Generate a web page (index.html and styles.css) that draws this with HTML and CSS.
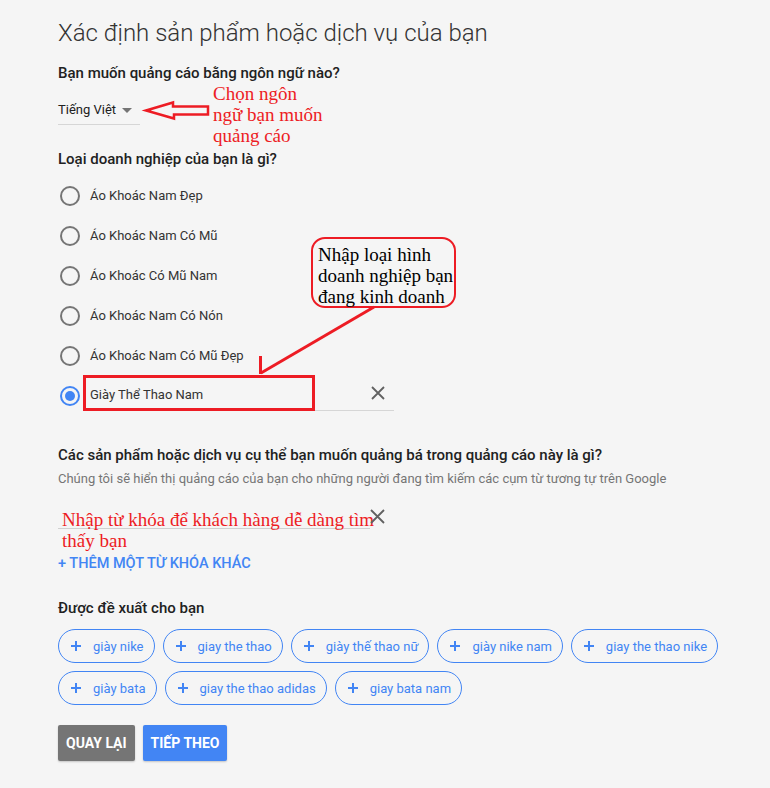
FILE: index.html
```html
<!DOCTYPE html>
<html lang="vi">
<head>
<meta charset="utf-8">
<title>Xác định sản phẩm hoặc dịch vụ của bạn</title>
<link rel="stylesheet" href="styles.css">
</head>
<body>
<div class="page">
  <h1 class="title">Xác định sản phẩm hoặc dịch vụ của bạn</h1>

  <h2 class="q q1">Bạn muốn quảng cáo bằng ngôn ngữ nào?</h2>
  <div class="select"><span>Tiếng Việt</span><span class="caret"></span></div>

  <h2 class="q q2">Loại doanh nghiệp của bạn là gì?</h2>
  <div class="radios">
    <div class="radio-row"><span class="radio"></span><span>Áo Khoác Nam Đẹp</span></div>
    <div class="radio-row"><span class="radio"></span><span>Áo Khoác Nam Có Mũ</span></div>
    <div class="radio-row"><span class="radio"></span><span>Áo Khoác Có Mũ Nam</span></div>
    <div class="radio-row"><span class="radio"></span><span>Áo Khoác Nam Có Nón</span></div>
    <div class="radio-row"><span class="radio"></span><span>Áo Khoác Nam Có Mũ Đẹp</span></div>
    <div class="radio-row"><span class="radio on"></span>
      <div class="text-field"><span>Giày Thể Thao Nam</span>
        <svg class="x-icon" width="14" height="14" viewBox="0 0 14 14"><path d="M1 1L13 13M13 1L1 13" stroke="#616161" stroke-width="1.8" fill="none"/></svg>
      </div>
    </div>
  </div>

  <h2 class="q q3">Các sản phẩm hoặc dịch vụ cụ thể bạn muốn quảng bá trong quảng cáo này là gì?</h2>
  <p class="sub">Chúng tôi sẽ hiển thị quảng cáo của bạn cho những người đang tìm kiếm các cụm từ tương tự trên Google</p>

  <div class="kw-row">
    <div class="kw-field"><span class="kw-text">Nhập từ khóa để khách hàng dễ dàng tìm<br>thấy bạn</span></div>
    <svg class="kw-x" width="15" height="15" viewBox="0 0 15 15"><path d="M1 1L14 14M14 1L1 14" stroke="#616161" stroke-width="1.8" fill="none"/></svg>
  </div>
  <div class="add-link">+ THÊM MỘT TỪ KHÓA KHÁC</div>

  <h2 class="q q4">Được đề xuất cho bạn</h2>
  <div class="chips">
    <span class="chip"><span class="plus"></span>giày nike</span>
    <span class="chip"><span class="plus"></span>giay the thao</span>
    <span class="chip"><span class="plus"></span>giày thế thao nữ</span>
    <span class="chip"><span class="plus"></span>giày nike nam</span>
    <span class="chip"><span class="plus"></span>giay the thao nike</span>
    <span class="chip"><span class="plus"></span>giày bata</span>
    <span class="chip"><span class="plus"></span>giay the thao adidas</span>
    <span class="chip"><span class="plus"></span>giay bata nam</span>
  </div>

  <div class="actions">
    <button class="btn back">QUAY LẠI</button>
    <button class="btn next">TIẾP THEO</button>
  </div>

  <svg class="overlay" width="770" height="788" viewBox="0 0 770 788">
    <polygon points="146,110.5 173,102.5 173,106.5 208,106.5 208,114.5 174,114.5 174,118.5" fill="none" stroke="#ed1c24" stroke-width="2.5" stroke-linejoin="miter"/>
    <line x1="374" y1="307" x2="261" y2="373" stroke="#ed1c24" stroke-width="3"/>
    <line x1="260.5" y1="356" x2="260.5" y2="374" stroke="#ed1c24" stroke-width="3"/>
    <rect x="84.5" y="376.5" width="229" height="33" fill="none" stroke="#ed1c24" stroke-width="3"/>
  </svg>
  <div class="note-lang">Chọn ngôn<br>ngữ bạn muốn<br>quảng cáo</div>
  <div class="bubble">Nhập loại hình<br>doanh nghiệp bạn<br>đang kinh doanh</div>
</div>
</body>
</html>
```

FILE: styles.css
```css
* { box-sizing: border-box; }
html, body { margin: 0; padding: 0; }
body {
  background: #f5f5f5;
  font-family: Roboto, "Noto Sans", "Liberation Sans", sans-serif;
  color: #212121;
}
.page {
  position: relative;
  width: 770px;
  height: 788px;
  padding: 19px 0 0 58px;
  overflow: hidden;
}
.title {
  margin: 0;
  font-size: 24px;
  font-weight: 300;
  line-height: 28px;
  color: #333;
}
.q {
  margin: 0;
  font-size: 15px;
  font-weight: 500;
  line-height: 20px;
  color: #212121;
}
.q1 { margin-top: 16px; }
.select {
  margin-top: 17px;
  width: 82px;
  height: 25px;
  padding-bottom: 4px;
  border-bottom: 1px solid #d6d6d6;
  display: flex;
  align-items: center;
  font-size: 13px;
  line-height: 20px;
  color: #212121;
}
.caret {
  width: 0;
  height: 0;
  margin-left: 6px;
  border-left: 5px solid transparent;
  border-right: 5px solid transparent;
  border-top: 5px solid #757575;
}
.q2 { margin-top: 24px; }
.radios {
  margin-top: 7px;
  display: flex;
  flex-direction: column;
}
.radio-row {
  display: flex;
  align-items: center;
  height: 40px;
  font-size: 13px;
  line-height: 20px;
  color: #333;
}
.radio {
  position: relative;
  flex: none;
  width: 20px;
  height: 20px;
  margin-left: 2px;
  margin-right: 10px;
  border: 2px solid #757575;
  border-radius: 50%;
}
.radio.on {
  border-color: #4285f4;
  margin-right: 3px;
}
.radio.on::after {
  content: "";
  position: absolute;
  left: 3px;
  top: 3px;
  width: 10px;
  height: 10px;
  border-radius: 50%;
  background: #4285f4;
}
.text-field {
  align-self: flex-start;
  width: 311px;
  height: 35px;
  padding: 4px 9px 0 7px;
  border-bottom: 1px solid #d6d6d6;
  display: flex;
  align-items: center;
  justify-content: space-between;
}
.x-icon { display: block; margin-top: -5px; }
.q3 { margin-top: 29px; }
.sub {
  margin: 6px 0 0;
  font-size: 13px;
  line-height: 16px;
  color: #757575;
}
.kw-row {
  margin-top: 22px;
  display: flex;
  align-items: flex-start;
  height: 20px;
}
.kw-field {
  width: 312px;
  height: 20px;
  padding-left: 4px;
  border-bottom: 1px solid #d0d0d0;
  overflow: visible;
}
.kw-text {
  display: block;
  white-space: nowrap;
  font-family: "Liberation Serif", "Times New Roman", serif;
  font-size: 19px;
  line-height: 21px;
  color: #ed1c24;
}
.kw-x { display: block; margin-left: 0; }
.add-link {
  margin-top: 25px;
  font-size: 14.5px;
  font-weight: 500;
  line-height: 20px;
  color: #4285f4;
}
.q4 { margin-top: 24px; }
.chips {
  margin-top: 11px;
  width: 680px;
  display: flex;
  flex-wrap: wrap;
  gap: 8px 8px;
}
.chip {
  display: inline-flex;
  align-items: center;
  height: 34px;
  padding: 0 10px 0 12px;
  border: 1px solid #4285f4;
  border-radius: 17px;
  font-size: 13px;
  color: #4285f4;
  background: transparent;
}
.plus {
  position: relative;
  width: 10px;
  height: 10px;
  margin-right: 12px;
}
.plus::before, .plus::after {
  content: "";
  position: absolute;
  background: #4285f4;
}
.plus::before { left: 0; top: 4px; width: 10px; height: 2px; }
.plus::after { left: 4px; top: 0; width: 2px; height: 10px; }
.actions {
  margin-top: 20px;
  display: flex;
  gap: 8px;
}
.btn {
  height: 36px;
  padding: 0 8px;
  border: none;
  border-radius: 2px;
  font-family: Roboto, "Noto Sans", sans-serif;
  font-size: 14px;
  font-weight: 700;
  color: #fff;
  box-shadow: 0 1px 2px rgba(0,0,0,0.2);
}
.btn.back { background: #757575; }
.btn.next { background: #4285f4; }
.overlay {
  position: absolute;
  left: 0;
  top: 0;
  pointer-events: none;
}
.note-lang {
  position: absolute;
  left: 213px;
  top: 83px;
  font-family: "Liberation Serif", "Times New Roman", serif;
  font-size: 19px;
  line-height: 21px;
  color: #ed1c24;
}
.bubble {
  position: absolute;
  left: 311px;
  top: 237px;
  width: 145px;
  height: 71px;
  padding: 5px 0 0 5px;
  border: 2.5px solid #ed1c24;
  border-radius: 14px;
  font-family: "Liberation Serif", "Times New Roman", serif;
  font-size: 19px;
  line-height: 21px;
  color: #000;
  white-space: nowrap;
}
```
